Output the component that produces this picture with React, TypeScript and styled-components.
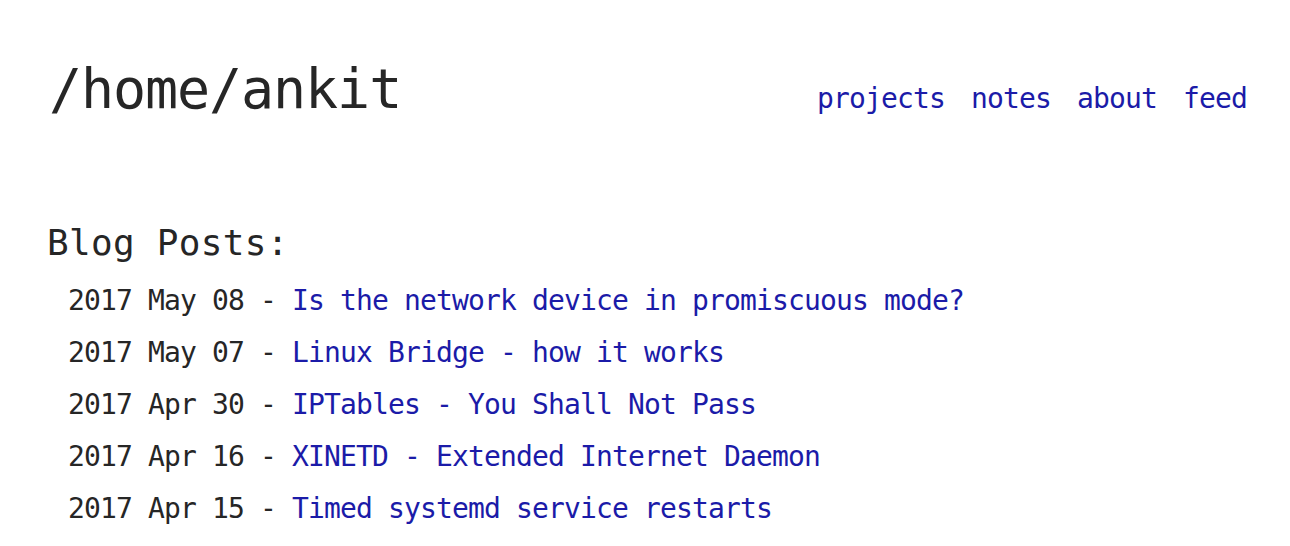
import { createGlobalStyle } from "styled-components";
import styled from "styled-components";

const GlobalStyle = createGlobalStyle`
  body {
    margin: 0;
    background: #ffffff;
    color: #262626;
    font-family: "DejaVu Sans Mono", "Liberation Mono", monospace;
  }
`;

const SPage = styled.div`
  padding: 57px 43px 0 47px;
`;

const SHeader = styled.header`
  display: flex;
  justify-content: space-between;
  align-items: baseline;
`;

const STitle = styled.h1`
  margin: 0 0 0 2px;
  font-size: 55px;
  line-height: 64px;
  font-weight: normal;
  letter-spacing: -1.1px;
`;

const SNav = styled.nav`
  display: flex;
  gap: 26px;
`;

const SLink = styled.a`
  color: #1b1ba8;
  text-decoration: none;
  font-size: 28px;
  letter-spacing: -0.86px;
`;

const SSectionTitle = styled.h2`
  margin: 101px 0 0;
  font-size: 36px;
  line-height: 42px;
  font-weight: normal;
  letter-spacing: 0.3px;
`;

const SPostList = styled.ul`
  list-style: none;
  margin: 11px 0 0;
  padding: 0 0 0 21px;
`;

const SPost = styled.li`
  font-size: 28px;
  line-height: 52px;
  letter-spacing: -0.86px;
  white-space: pre;
`;

const posts = [
  { date: "2017 May 08", title: "Is the network device in promiscuous mode?" },
  { date: "2017 May 07", title: "Linux Bridge - how it works" },
  { date: "2017 Apr 30", title: "IPTables - You Shall Not Pass" },
  { date: "2017 Apr 16", title: "XINETD - Extended Internet Daemon" },
  { date: "2017 Apr 15", title: "Timed systemd service restarts" },
];

export default function App() {
  return (
    <>
      <GlobalStyle />
      <SPage>
        <SHeader>
          <STitle>/home/ankit</STitle>
          <SNav>
            <SLink href="#">projects</SLink>
            <SLink href="#">notes</SLink>
            <SLink href="#">about</SLink>
            <SLink href="#">feed</SLink>
          </SNav>
        </SHeader>
        <SSectionTitle>Blog Posts:</SSectionTitle>
        <SPostList>
          {posts.map((p) => (
            <SPost key={p.date + p.title}>
              {p.date} - <SLink href="#">{p.title}</SLink>
            </SPost>
          ))}
        </SPostList>
      </SPage>
    </>
  );
}
